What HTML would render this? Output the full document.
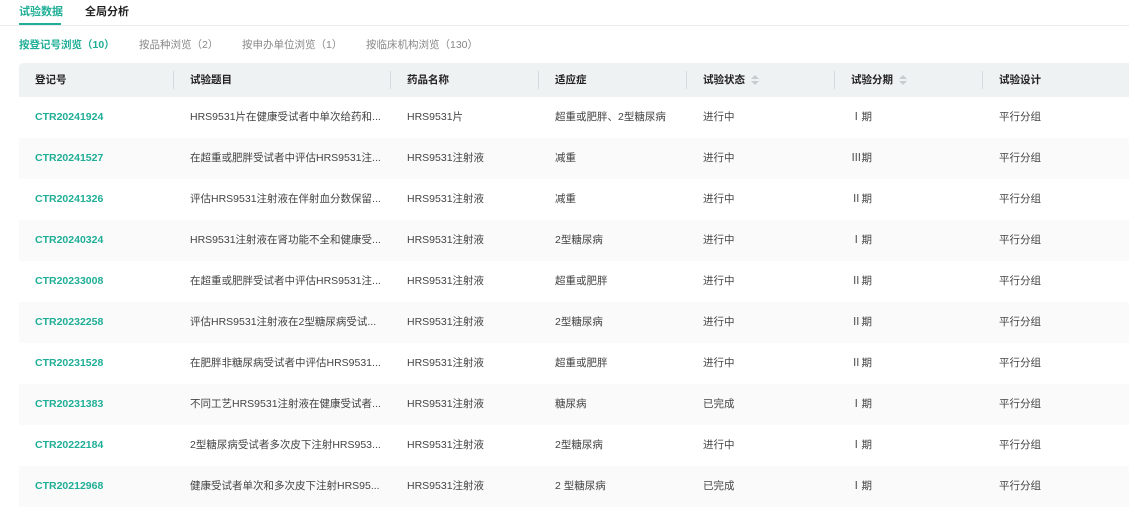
<!DOCTYPE html>
<html><head><meta charset="utf-8"><style>
body{margin:0;width:1129px;height:504px;overflow:hidden;background:#fff;font-family:"Liberation Sans","Noto Sans CJK SC",sans-serif;font-size:10.5px;color:#444}
.tabs{position:absolute;left:0;top:0;width:1129px;height:25px;border-bottom:1px solid #e8eaec}
.tab{position:absolute;top:3px;font-size:11px;font-weight:bold;color:#222}
.tab.a{color:#1fae96;left:19px}
.ul{position:absolute;left:19px;top:23px;width:42px;height:2px;background:#1fae96}
.sub{position:absolute;top:37px;color:#888;font-size:10.5px}
.sub.a{color:#1fae96;font-weight:bold}
.tbl{position:absolute;left:19px;top:63px;width:1120px}
.hd{height:34px;background:#eff2f3;border-radius:4px 0 0 0;position:relative;font-weight:bold;color:#222}
.row{height:41px;position:relative}
.c{position:absolute;top:0;line-height:41px;white-space:nowrap}
.hd .c{line-height:34px}
.sep{position:absolute;top:8px;width:1px;height:18px;background:#d6d9db}
.id{color:#1fae96;font-weight:bold}
.sort{display:inline-block;vertical-align:middle;margin-left:6px;width:8px;height:10px;position:relative}
.sort:before,.sort:after{content:"";position:absolute;left:0;border:4px solid transparent}
.sort:before{top:-4px;border-bottom-color:#c8ccd0}
.sort:after{top:6px;border-top-color:#c8ccd0}
</style></head><body>
<div class="tabs"><span class="tab a">试验数据</span><span class="tab" style="left:85px">全局分析</span><div class="ul"></div></div>
<span class="sub a" style="left:19px">按登记号浏览（10）</span>
<span class="sub" style="left:139px">按品种浏览（2）</span>
<span class="sub" style="left:242px">按申办单位浏览（1）</span>
<span class="sub" style="left:366px">按临床机构浏览（130）</span>
<div class="tbl">
<div class="hd">
<span class="c" style="left:16px">登记号</span><div class="sep" style="left:154px"></div>
<span class="c" style="left:171px">试验题目</span><div class="sep" style="left:371px"></div>
<span class="c" style="left:388px">药品名称</span><div class="sep" style="left:519px"></div>
<span class="c" style="left:536px">适应症</span><div class="sep" style="left:667px"></div>
<span class="c" style="left:684px">试验状态<i class="sort"></i></span><div class="sep" style="left:815px"></div>
<span class="c" style="left:832px">试验分期<i class="sort"></i></span><div class="sep" style="left:963px"></div>
<span class="c" style="left:980px">试验设计</span>
</div>
</div>
<div class="tbl" style="top:97px">
<div class="row" style="background:#fff"><span class="c id" style="left:16px">CTR20241924</span><span class="c" style="left:171px">HRS9531片在健康受试者中单次给药和...</span><span class="c" style="left:388px">HRS9531片</span><span class="c" style="left:536px">超重或肥胖、2型糖尿病</span><span class="c" style="left:684px">进行中</span><span class="c" style="left:832px">Ⅰ期</span><span class="c" style="left:980px">平行分组</span></div>
<div class="row" style="background:#fafafa"><span class="c id" style="left:16px">CTR20241527</span><span class="c" style="left:171px">在超重或肥胖受试者中评估HRS9531注...</span><span class="c" style="left:388px">HRS9531注射液</span><span class="c" style="left:536px">减重</span><span class="c" style="left:684px">进行中</span><span class="c" style="left:832px">Ⅲ期</span><span class="c" style="left:980px">平行分组</span></div>
<div class="row" style="background:#fff"><span class="c id" style="left:16px">CTR20241326</span><span class="c" style="left:171px">评估HRS9531注射液在伴射血分数保留...</span><span class="c" style="left:388px">HRS9531注射液</span><span class="c" style="left:536px">减重</span><span class="c" style="left:684px">进行中</span><span class="c" style="left:832px">Ⅱ期</span><span class="c" style="left:980px">平行分组</span></div>
<div class="row" style="background:#fafafa"><span class="c id" style="left:16px">CTR20240324</span><span class="c" style="left:171px">HRS9531注射液在肾功能不全和健康受...</span><span class="c" style="left:388px">HRS9531注射液</span><span class="c" style="left:536px">2型糖尿病</span><span class="c" style="left:684px">进行中</span><span class="c" style="left:832px">Ⅰ期</span><span class="c" style="left:980px">平行分组</span></div>
<div class="row" style="background:#fff"><span class="c id" style="left:16px">CTR20233008</span><span class="c" style="left:171px">在超重或肥胖受试者中评估HRS9531注...</span><span class="c" style="left:388px">HRS9531注射液</span><span class="c" style="left:536px">超重或肥胖</span><span class="c" style="left:684px">进行中</span><span class="c" style="left:832px">Ⅱ期</span><span class="c" style="left:980px">平行分组</span></div>
<div class="row" style="background:#fafafa"><span class="c id" style="left:16px">CTR20232258</span><span class="c" style="left:171px">评估HRS9531注射液在2型糖尿病受试...</span><span class="c" style="left:388px">HRS9531注射液</span><span class="c" style="left:536px">2型糖尿病</span><span class="c" style="left:684px">进行中</span><span class="c" style="left:832px">Ⅱ期</span><span class="c" style="left:980px">平行分组</span></div>
<div class="row" style="background:#fff"><span class="c id" style="left:16px">CTR20231528</span><span class="c" style="left:171px">在肥胖非糖尿病受试者中评估HRS9531...</span><span class="c" style="left:388px">HRS9531注射液</span><span class="c" style="left:536px">超重或肥胖</span><span class="c" style="left:684px">进行中</span><span class="c" style="left:832px">Ⅱ期</span><span class="c" style="left:980px">平行分组</span></div>
<div class="row" style="background:#fafafa"><span class="c id" style="left:16px">CTR20231383</span><span class="c" style="left:171px">不同工艺HRS9531注射液在健康受试者...</span><span class="c" style="left:388px">HRS9531注射液</span><span class="c" style="left:536px">糖尿病</span><span class="c" style="left:684px">已完成</span><span class="c" style="left:832px">Ⅰ期</span><span class="c" style="left:980px">平行分组</span></div>
<div class="row" style="background:#fff"><span class="c id" style="left:16px">CTR20222184</span><span class="c" style="left:171px">2型糖尿病受试者多次皮下注射HRS953...</span><span class="c" style="left:388px">HRS9531注射液</span><span class="c" style="left:536px">2型糖尿病</span><span class="c" style="left:684px">进行中</span><span class="c" style="left:832px">Ⅰ期</span><span class="c" style="left:980px">平行分组</span></div>
<div class="row" style="background:#fafafa"><span class="c id" style="left:16px">CTR20212968</span><span class="c" style="left:171px">健康受试者单次和多次皮下注射HRS95...</span><span class="c" style="left:388px">HRS9531注射液</span><span class="c" style="left:536px">2 型糖尿病</span><span class="c" style="left:684px">已完成</span><span class="c" style="left:832px">Ⅰ期</span><span class="c" style="left:980px">平行分组</span></div>
</div>
</body></html>
